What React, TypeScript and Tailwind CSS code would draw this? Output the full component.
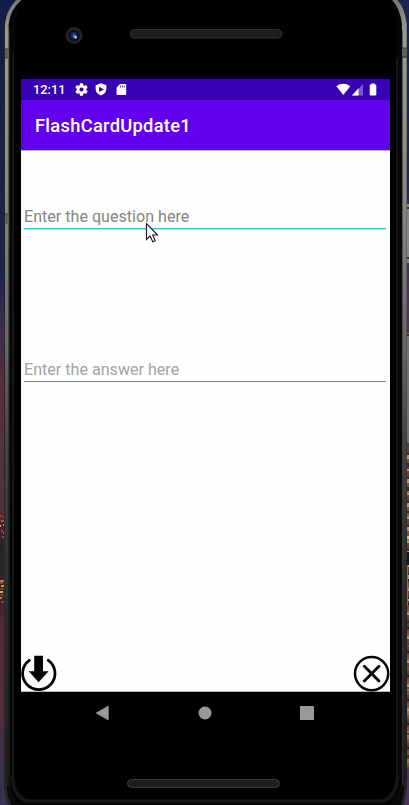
import React from "react";

const lights: [number, number, number, string][] = [
  [0, 515, 1, "#d8401c"], [2, 516, 2, "#a62e1c"], [1, 520, 3, "#e0491c"], [3, 524, 1, "#ff7632"],
  [0, 525, 1, "#ff9651"], [1, 530, 2, "#d8361c"], [3, 532, 1, "#ff6830"], [2, 536, 2, "#d13a20"],
  [0, 580, 4, "#c87434"], [0, 582, 3, "#8e4525"], [1, 585, 3, "#d98c45"], [0, 588, 4, "#7c3820"],
  [0, 591, 3, "#e0a55c"], [0, 594, 4, "#8a351f"], [0, 597, 2, "#d4743a"], [1, 601, 3, "#a83c20"],
];

const cityColors = ["#6b3f2a", "#a06a44", "#3a2624", "#8a4a2a", "#241c20", "#c09464", "#5a3a30", "#7a5238"];

function Device() {
  return (
    <svg className="absolute inset-0" width="409" height="805" viewBox="0 0 409 805" aria-hidden="true">
      <defs>
        <linearGradient id="wallL" x1="0" y1="0" x2="0" y2="805" gradientUnits="userSpaceOnUse">
          <stop offset="0" stopColor="#141c48" />
          <stop offset=".33" stopColor="#1d2450" />
          <stop offset=".39" stopColor="#322954" />
          <stop offset=".47" stopColor="#5a2c40" />
          <stop offset=".63" stopColor="#58303c" />
          <stop offset=".67" stopColor="#28222c" />
          <stop offset=".74" stopColor="#2c2430" />
          <stop offset=".77" stopColor="#542638" />
          <stop offset=".88" stopColor="#5a2a3c" />
          <stop offset=".93" stopColor="#40304e" />
          <stop offset="1" stopColor="#383052" />
        </linearGradient>
        <linearGradient id="wallR" x1="0" y1="0" x2="0" y2="805" gradientUnits="userSpaceOnUse">
          <stop offset="0" stopColor="#1a2450" />
          <stop offset=".2" stopColor="#1f2750" />
          <stop offset=".32" stopColor="#403258" />
          <stop offset=".42" stopColor="#553454" />
          <stop offset="1" stopColor="#4a3558" />
        </linearGradient>
        <linearGradient id="metal" x1="0" y1="0" x2="0" y2="805" gradientUnits="userSpaceOnUse">
          <stop offset="0" stopColor="#777" />
          <stop offset=".04" stopColor="#999" />
          <stop offset=".26" stopColor="#858585" />
          <stop offset=".44" stopColor="#646464" />
          <stop offset=".54" stopColor="#464646" />
          <stop offset=".66" stopColor="#353535" />
          <stop offset=".78" stopColor="#292929" />
          <stop offset="1" stopColor="#1c1c1c" />
        </linearGradient>
        <pattern id="mesh" width="4" height="4" patternUnits="userSpaceOnUse">
          <rect width="4" height="4" fill="#1b1919" />
          <circle cx="1" cy="1.5" r=".8" fill="#332f2e" />
          <circle cx="3" cy="3.2" r=".7" fill="#2d2928" />
        </pattern>
      </defs>
      <rect width="205" height="805" fill="url(#wallL)" />
      <rect x="205" width="204" height="805" fill="url(#wallR)" />
      {lights.map(([x, y, w, c], i) => (
        <rect key={i} x={x} y={y} width={w} height="2" fill={c} />
      ))}
      {Array.from({ length: 160 }, (_, i) => (
        <rect key={i} x="406" y={447 + i * 2} width="3" height="2" fill={cityColors[(i * i * 3 + (i % 11) * 5 + (i >> 2)) % 8]} />
      ))}
      <rect x="406" y="552" width="3" height="13" fill="#15151b" />
      <rect x="406" y="536" width="3" height="3" fill="#e0b870" />
      <rect x="407" y="565" width="1" height="41" fill="#777" />
      <rect x="406" y="204" width="3" height="59" fill="#858585" />
      <rect x="406" y="207" width="3" height="2" fill="#333" />
      <rect x="406" y="257" width="3" height="2" fill="#333" />
      <rect x="406" y="333" width="3" height="114" fill="#727272" />
      <rect x="406" y="334" width="3" height="2" fill="#333" />
      <rect x="406" y="443" width="3" height="4" fill="#444" />

      <path d="M4 26C5 12 12 4 19-2H394C402 4 406 13 407 26V782Q406 801 400 812H13Q5 801 4 782Z" fill="#0a0a0a" />
      <path d="M4.5 785V26C6 13 12 5 19-1" fill="none" stroke="#272727" />
      <path d="M6.8 786V24C8 12 13 5 20-1" fill="none" stroke="url(#metal)" strokeWidth="3.6" />
      <path d="M404.4 786V24C403 12 399 4 393-1" fill="none" stroke="url(#metal)" strokeWidth="4.8" />
      <path d="M402.5 785V30" stroke="#333" strokeWidth="1" opacity=".6" />
      <path d="M5 780Q6 799 13 810M406 780Q405 799 400 810" fill="none" stroke="#272727" strokeWidth="2" />
      <path d="M9 28C11 13 17 5 24-2H390C397 4 401 14 401 28V782Q399 799 389 806H24Q11 800 9 782Z" fill="#060606" />
      <path d="M9.5 28V790" stroke="#1a1a1a" />
      <path d="M13 52V780M397 58V780" stroke="#161616" strokeWidth="2" />
      <path d="M12 776Q14 797 27 801H383Q396 797 398 776" fill="none" stroke="#181818" strokeWidth="3" />
      <path d="M14 24Q19 6 26-2H387Q393 5 396 24V776Q391 796 380 799H31Q18 796 15 776Z" fill="#000" />
      <path d="M5 49H9V58H5ZM402 48H407V58H402ZM5 214H9V224H5Z" fill="#606060" />
      <path d="M5 49H9M5 58H9M402 48H407M402 57H407M5 214H9" stroke="#3c3c3c" />

      <circle cx="74" cy="35.5" r="8.5" fill="#252323" />
      <circle cx="74" cy="35.5" r="5.5" fill="#0b0c18" />
      <circle cx="74" cy="35.5" r="3.5" fill="#1b2a6a" />
      <path d="M73 34L77 36L76 39L73 37Z" fill="#5276c4" />
      <circle cx="75.7" cy="37.3" r="1.1" fill="#d8e8ff" />
      <rect x="130" y="29.5" width="152" height="8.5" rx="4.25" fill="url(#mesh)" stroke="#303030" />
      <rect x="127.5" y="779.5" width="152" height="8" rx="4" fill="url(#mesh)" stroke="#3b3b3b" />
    </svg>
  );
}

function StatusBar() {
  return (
    <div className="flex h-[21px] items-center bg-[#3700b3] pl-3 pr-[13px] text-white">
      <span className="w-[42px] whitespace-nowrap pt-px text-[12.8px] font-medium leading-5">12:11</span>
      <svg width="13" height="13" viewBox="2 2 20 20" fill="currentColor">
        <path d="M19.14 12.94c.04-.3.06-.61.06-.94s-.02-.64-.07-.94l2.03-1.58a.49.49 0 0 0 .12-.61l-1.92-3.32a.49.49 0 0 0-.59-.22l-2.39.96a7 7 0 0 0-1.62-.94l-.36-2.54A.48.48 0 0 0 13.92 2.4h-3.84a.48.48 0 0 0-.48.41l-.36 2.54a7 7 0 0 0-1.62.94l-2.39-.96a.49.49 0 0 0-.59.22L2.72 8.87a.49.49 0 0 0 .12.61l2.03 1.58a6 6 0 0 0 0 1.88l-2.03 1.58a.49.49 0 0 0-.12.61l1.92 3.32c.12.22.37.29.59.22l2.39-.96c.5.38 1.03.7 1.62.94l.36 2.54c.05.24.24.41.48.41h3.84c.24 0 .44-.17.48-.41l.36-2.54a7 7 0 0 0 1.62-.94l2.39.96c.22.08.47 0 .59-.22l1.92-3.32a.49.49 0 0 0-.12-.61zM12 15.2a3.2 3.2 0 1 1 0-6.4 3.2 3.2 0 0 1 0 6.4z" />
      </svg>
      <svg className="ml-[7px]" width="12" height="13" viewBox="0 0 12 13" fill="currentColor">
        <path fillRule="evenodd" d="M6 .3L11.4 2.2V6Q11.2 10.5 6 12.5Q.8 10.5.6 6V2.2ZM4.1 3.7V9L9 6.4Z" />
      </svg>
      <svg className="ml-[9px]" width="11" height="13" viewBox="0 0 11 13" fill="currentColor">
        <path fillRule="evenodd" d="M4 1H9.5Q10.2 1 10.2 1.8V11.2Q10.2 12 9.4 12H1.4Q.6 12 .6 11.2V4.4ZM4.2 2.6V4.6H5V2.6ZM6 2.6V4.6H6.8V2.6ZM7.8 2.6V4.6H8.6V2.6Z" />
      </svg>
      <svg className="ml-auto" width="15" height="13" viewBox="0 0 15 13" fill="currentColor">
        <path d="M.3 3.2Q7.3-1.7 14.3 3.2L7.3 12Z" />
      </svg>
      <svg width="13" height="13" viewBox="0 0 13 13" fill="currentColor">
        <path d="M12 1V12.5H1Z" opacity=".35" />
        <path d="M7.5 5.2V12.5H1Z" />
      </svg>
      <svg className="ml-[5px]" width="8" height="13" viewBox="0 0 8 13" fill="currentColor">
        <path d="M2.4.4H5.6V1.5H6.6Q7.3 1.5 7.3 2.2V11.8Q7.3 12.5 6.6 12.5H1.4Q.7 12.5.7 11.8V2.2Q.7 1.5 1.4 1.5H2.4Z" />
      </svg>
    </div>
  );
}

export default function App() {
  return (
    <div className="relative h-[805px] w-[409px] overflow-hidden bg-black font-['Roboto',sans-serif]">
      <Device />
      <div className="relative flex h-full flex-col pl-[21px] pr-[19px] pt-[79px]">
        <StatusBar />
        <header className="flex h-[50px] items-center bg-[#6200ee] pl-[14px]">
          <h1 className="whitespace-nowrap pt-[2px] text-[18.3px] font-medium leading-6 tracking-[0.3px] text-white">FlashCardUpdate1</h1>
        </header>
        <main className="flex h-[542px] flex-col border-t border-[#b9adcc] bg-[#fefefe]">
          <div className="ml-[3px] mr-1 mt-[53px] h-[25px] border-b border-[#03dac5] text-[16.1px] leading-[25px] text-[#858585] shadow-[0_1px_0_#a5efe7]">
            <span className="whitespace-nowrap">Enter the question here</span>
          </div>
          <div className="ml-[3px] mr-1 mt-[129px] h-[24px] border-b border-[#858585] text-[16.1px] leading-6 text-[#a3a3a3]">
            <span className="whitespace-nowrap">Enter the answer here</span>
          </div>
          <div className="mt-auto flex h-[37px] justify-between border-b border-[#b7b7b7]">
            <svg className="overflow-visible" width="36" height="36" viewBox="0 -1 36 36">
              <path d="M8.3 4.3A16.2 16.2 0 1 0 27.3 4.3" fill="none" stroke="#050505" strokeWidth="2.8" strokeLinecap="round" />
              <path d="M13.2-.2H22V15.2H27.6L17.6 26.2L7.7 15.2H13.2Z" fill="#050505" />
            </svg>
            <svg className="overflow-visible" width="36" height="36" viewBox="0 -.6 36 36">
              <circle cx="17.6" cy="18" r="16.6" fill="none" stroke="#050505" strokeWidth="2.5" />
              <path d="M10.3 10.7L25 25.4M25 10.7L10.3 25.4" fill="none" stroke="#050505" strokeWidth="2.8" strokeLinecap="round" />
            </svg>
          </div>
        </main>
        <nav className="flex h-[42px] items-center pl-[74px]">
          <svg width="14" height="16" viewBox="0 0 14 16"><path d="M.5 8L13.7.6V15.4Z" fill="#999" /></svg>
          <svg className="ml-[89px]" width="14" height="14" viewBox="0 0 14 14"><circle cx="7" cy="7" r="6.5" fill="#999" /></svg>
          <svg className="ml-[88px]" width="14" height="14" viewBox="0 0 14 14"><rect width="14" height="14" rx=".8" fill="#999" /></svg>
        </nav>
      </div>
      <svg className="absolute left-[145px] top-[222px]" width="14" height="22" viewBox="0 0 14 22" aria-hidden="true">
        <path d="M1.5 1.5V17.5L5 14L7.8 19.8L10.3 18.7L7.7 13H12.5Z" fill="#fff" stroke="#161625" strokeWidth="1.1" strokeLinejoin="miter" />
      </svg>
    </div>
  );
}
